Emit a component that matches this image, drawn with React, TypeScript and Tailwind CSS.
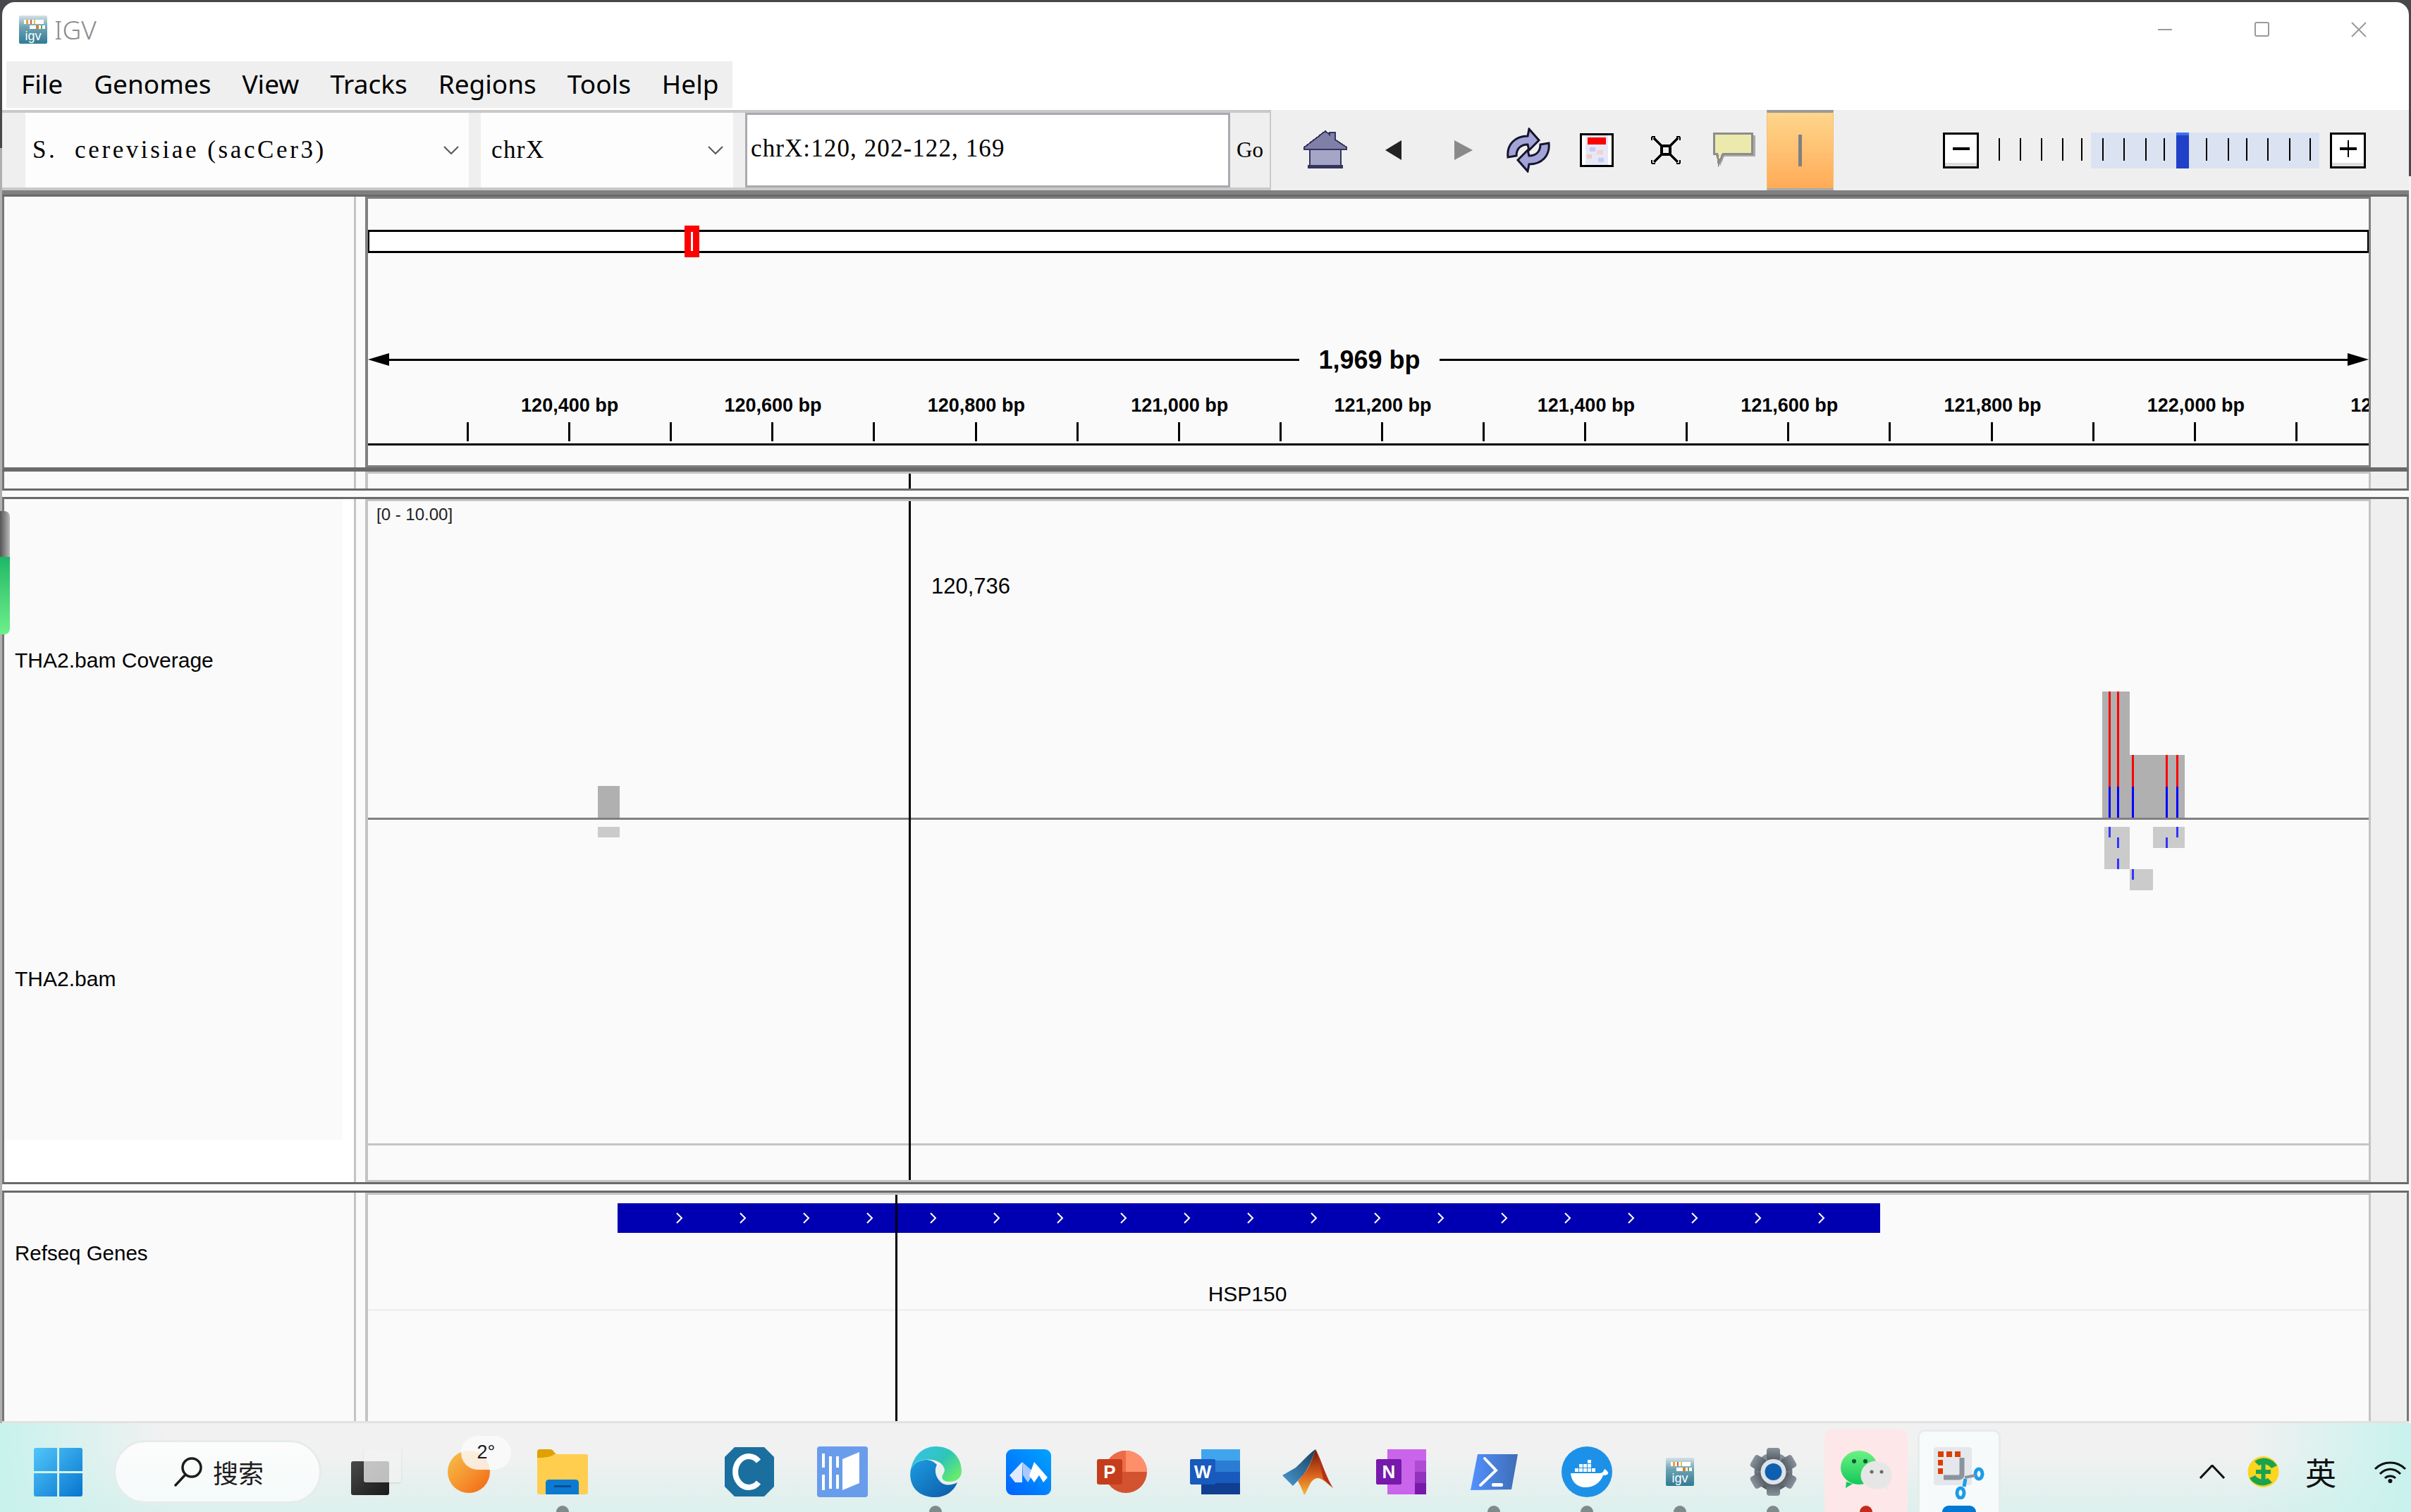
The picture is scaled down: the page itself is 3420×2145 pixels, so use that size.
import type { ReactNode } from 'react';

const TICK_START = 142; // first tick, relative to the data pane
const TICK_STEP = 144.1;
const LABEL_STEP = 144.17;
const TICKS = Array.from({ length: 19 }, (_, i) => TICK_START + i * TICK_STEP);
const LABELS = [
  '120,400', '120,600', '120,800', '121,000', '121,200', '121,400', '121,600', '121,800', '122,000', '122,200',
];
const CHEVRONS = Array.from({ length: 19 }, (_, i) => 88 + i * 90);
const ZOOM_TICKS = [28, 58, 88, 118, 145, 175, 205, 236, 262, 322, 353, 379, 409, 440, 469];

function IgvLogo({ size }: { size: number }) {
  return (
    <svg width={size} height={size} viewBox="0 0 40 40">
      <defs>
        <linearGradient id={`igv${size}`} x1="0" y1="0" x2="0" y2="1">
          <stop offset="0" stopColor="#d5e2e6" />
          <stop offset="0.4" stopColor="#6fa3b4" />
          <stop offset="1" stopColor="#2f7b95" />
        </linearGradient>
      </defs>
      <rect x="0" y="0" width="40" height="40" rx="2" fill={`url(#igv${size})`} />
      <rect x="7" y="6" width="28" height="6" fill="#fff" />
      <rect x="10" y="6" width="3" height="6" fill="#e8a33a" />
      <rect x="16" y="6" width="2" height="6" fill="#d9534f" />
      <rect x="21" y="6" width="2" height="6" fill="#e8c33a" />
      <rect x="15" y="14" width="22" height="5" fill="#fff" />
      <rect x="24" y="14" width="4" height="5" fill="#e07b2a" />
      <rect x="31" y="14" width="2" height="5" fill="#6aa84f" />
      <text x="20" y="35" textAnchor="middle" fontFamily="Liberation Sans" fontSize="18" fill="#fff">igv</text>
    </svg>
  );
}

function WindowControls() {
  return (
    <svg width="296" height="24" viewBox="0 0 296 24" fill="none" stroke="#9a9a9a" strokeWidth="2">
      <path d="M0 12H20" />
      <rect x="138" y="2" width="19" height="19" rx="2" />
      <path d="M275 2L295 22M295 2L275 22" />
    </svg>
  );
}

function ComboBox({ text, width, tracking }: { text: string; width: string; tracking: string }) {
  return (
    <div className={`flex h-full items-center justify-between bg-[#fdfdfd] ${width}`}>
      <span className={`pl-[10px] font-['Liberation_Serif',serif] text-[35px] whitespace-pre text-black ${tracking}`}>{text}</span>
      <svg className="mr-[14px]" width="22" height="12" viewBox="0 0 22 12" fill="none" stroke="#555" strokeWidth="2">
        <path d="M1 1L11 11L21 1" />
      </svg>
    </div>
  );
}

function HomeIcon() {
  return (
    <svg width="64" height="56" viewBox="0 0 64 56" shapeRendering="crispEdges">
      <path d="M32 1L38 6V3H46V13L62 24V27H2V24Z" fill="#7f7fa8" stroke="#35355f" strokeWidth="2" />
      <rect x="10" y="27" width="44" height="23" fill="#a5a5c8" stroke="#35355f" strokeWidth="2" />
      <rect x="7" y="49" width="50" height="5" fill="#35355f" />
    </svg>
  );
}

function RefreshIcon() {
  return (
    <svg width="66" height="64" viewBox="0 0 66 64">
      <path d="M4 42C2 24 14 12 32 12L34 2L48 18L34 32L32 24C22 24 16 30 16 40Z" fill="#a3a3d8" stroke="#15152f" strokeWidth="3" />
      <path d="M62 22C64 40 52 52 34 52L32 62L18 46L32 32L34 40C44 40 50 34 50 24Z" fill="#a3a3d8" stroke="#15152f" strokeWidth="3" />
    </svg>
  );
}

function RegionIcon() {
  return (
    <svg width="48" height="48" viewBox="0 0 48 48" shapeRendering="crispEdges">
      <rect x="0" y="0" width="48" height="48" fill="#000" />
      <rect x="3" y="3" width="42" height="42" fill="#fff" />
      <rect x="8" y="3" width="32" height="42" fill="#e6e8f8" />
      <rect x="11" y="6" width="26" height="10" fill="#ff0000" />
      <rect x="14" y="20" width="8" height="6" fill="#c3cdf2" />
      <rect x="24" y="24" width="9" height="6" fill="#f5d2ca" />
      <rect x="10" y="30" width="7" height="6" fill="#f5c9c0" />
      <rect x="26" y="35" width="8" height="6" fill="#c3cdf2" />
    </svg>
  );
}

function FitIcon() {
  return (
    <svg width="42" height="40" viewBox="0 0 42 40" fill="none" stroke="#000" strokeWidth="3" shapeRendering="crispEdges">
      <rect x="15" y="14" width="12" height="12" strokeWidth="4" />
      <path d="M4 3L15 14M38 3L27 14M4 37L15 26M38 37L27 26" strokeWidth="4" />
      <path d="M1 1H6M1 1V6M41 1H36M41 1V6M1 39H6M1 39V34M41 39H36M41 39V34" strokeWidth="2" />
    </svg>
  );
}

function CommentIcon() {
  return (
    <svg width="60" height="50" viewBox="0 0 60 50" shapeRendering="crispEdges">
      <path d="M4 4H60V34H16L10 48L8 34H4Z" fill="#aaa" />
      <path d="M1.5 1.5H55.5V30.5H14L8 44L6 30.5H1.5Z" fill="#ece9ac" stroke="#8c8c8c" strokeWidth="3" />
    </svg>
  );
}

function ZoomButton({ plus }: { plus?: boolean }) {
  return (
    <div className="flex h-[51px] w-[51px] flex-col border-[3px] border-black bg-white">
      <div className="flex flex-1 items-center justify-center">
        <svg width="30" height="30" viewBox="0 0 30 30" stroke="#000" fill="none">
          <path d="M3 15H27" strokeWidth="4" />
          {plus && <path d="M15 3V27" strokeWidth="2" />}
        </svg>
      </div>
      <div className="h-[5px] bg-[#dddddd]" />
    </div>
  );
}

function ZoomSlider() {
  return (
    <svg width="498" height="51" viewBox="0 0 498 51" shapeRendering="crispEdges">
      <rect x="159" y="0" width="324" height="51" fill="#dbe2f1" />
      {ZOOM_TICKS.map((x) => (
        <rect key={x} x={x} y="8" width="2" height="32" fill="#000" />
      ))}
      <rect x="280" y="0" width="18" height="51" fill="#2040c8" />
      <rect x="280" y="0" width="18" height="4" fill="#3f6fe8" />
    </svg>
  );
}

function Toolbar() {
  return (
    <div className="flex h-[114px] bg-[#efefef]">
      <div className="flex h-full w-[1800px] items-stretch border-y-[4px] border-r-[2px] border-[#c9c9c9] pl-[33px]">
        <ComboBox text="S.  cerevisiae (sacCer3)" width="w-[629px]" tracking="tracking-[3.6px]" />
        <div className="w-[17px]" />
        <ComboBox text="chrX" width="w-[358px]" tracking="tracking-[1.4px] ml-[5px]" />
        <div className="w-[17px]" />
        <div className="flex w-[688px] items-center border-[3px] border-[#a9a9b0] bg-white pb-[3px] pl-[5px] font-['Liberation_Serif',serif] text-[35px] tracking-[1.1px] whitespace-pre text-black">
          chrX:120, 202-122, 169
        </div>
        <div className="flex flex-1 items-center pl-[9px] font-['Liberation_Serif',serif] text-[31px] text-black">Go</div>
      </div>
      <div className="flex flex-1 items-center">
        <div className="ml-[45px]"><HomeIcon /></div>
        <svg className="ml-[53px]" width="24" height="28" viewBox="0 0 24 28"><path d="M0 14L23 0V28Z" fill="#222" /></svg>
        <svg className="ml-[74px]" width="26" height="28" viewBox="0 0 26 28"><path d="M26 14L0 0V28Z" fill="#8a8a8a" /></svg>
        <div className="ml-[46px]"><RefreshIcon /></div>
        <div className="ml-[40px]"><RegionIcon /></div>
        <div className="ml-[53px]"><FitIcon /></div>
        <div className="ml-[46px]"><CommentIcon /></div>
        <div className="ml-[16px] flex h-full w-[95px] flex-col items-center justify-center border-x border-t-[4px] border-b-[3px] border-x-[#f0c070] border-t-[#999] border-b-[#aaa] bg-gradient-to-b from-[#fed68b] to-[#ffab57]">
          <div className="h-[45px] w-[5px] bg-[#808080]" />
        </div>
        <div className="ml-[155px] flex items-center">
          <ZoomButton />
          <ZoomSlider />
          <ZoomButton plus />
        </div>
      </div>
    </div>
  );
}

type PanelProps = {
  outer: string;
  data: string;
  left: ReactNode;
  leftClass?: string;
  children?: ReactNode;
};

function Panel({ outer, data, left, leftClass = 'bg-[#fafafa]', children }: PanelProps) {
  return (
    <div className={`flex border-x-[3px] border-x-[#777777] border-y-[#6a6a6a] bg-[#fafafa] ${outer}`}>
      <div className={`relative w-[496px] text-black ${leftClass}`}>{left}</div>
      <div className="w-[3px] bg-[#c4c4c4]" />
      <div className="w-[13px]" />
      <div className={`relative w-[2845px] overflow-hidden border-x-[4px] border-r-[3px] bg-[#fafafa] ${data}`}>{children}</div>
      <div className="flex-1 bg-[#efefef]" />
    </div>
  );
}

function Ruler() {
  return (
    <div>
      <div className="mt-[44px] h-[33px] border-x-[2px] border-y-[3px] border-black bg-white" />
      {/* chromosome position marker */}
      <div className="absolute top-[38px] left-[449px] flex h-[45px] w-[21px] items-center justify-center bg-[#ff0000]">
        <div className="h-[27px] w-[3px] bg-white" />
      </div>
      <div className="mt-[133px] flex h-[36px] items-center">
        <svg width="30" height="18" viewBox="0 0 30 18"><path d="M0 9L30 0V18Z" fill="#000" /></svg>
        <div className="h-[3px] w-[1291px] bg-black" />
        <div className="w-[199px] pt-[2px] text-center text-[36px] font-bold text-black">1,969 bp</div>
        <div className="h-[3px] flex-1 bg-black" />
        <svg width="30" height="18" viewBox="0 0 30 18"><path d="M30 9L0 0V18Z" fill="#000" /></svg>
      </div>
      <div className="relative mt-[29px] h-[36px]">
        {LABELS.map((label, i) => (
          <span
            key={label}
            className="absolute top-0 -translate-x-1/2 text-[27px] leading-[36px] font-bold whitespace-pre text-black"
            style={{ left: TICK_START + LABEL_STEP * (2 * i + 1) }}
          >
            {label} bp
          </span>
        ))}
      </div>
      <svg className="mt-[6px] block" width="2838" height="27" viewBox="0 0 2838 27" shapeRendering="crispEdges">
        {TICKS.map((x) => (
          <rect key={x} x={x - 2} y="0" width="3" height="27" fill="#000" />
        ))}
      </svg>
      <div className="mt-[3px] h-[3px] bg-black" />
    </div>
  );
}

// same screen coordinates as the reference through the viewBox
function CoverageTrack() {
  const cov = '#b0b0b0';
  const read = '#cbcbcb';
  const mis = '#3333ff';
  return (
    <svg className="absolute top-0 left-0 block" width="2838" height="966" viewBox="522 711 2838 966" shapeRendering="crispEdges">
      <rect x="522" y="1622" width="2838" height="3" fill="#c4c4c4" />
      <rect x="848" y="1115" width="31" height="45" fill={cov} />
      <rect x="848" y="1173" width="31" height="15" fill={read} />
      <rect x="2982" y="981" width="39" height="179" fill={cov} />
      <rect x="3021" y="1071" width="78" height="89" fill={cov} />
      {[[2991, 981], [3003, 981], [3024, 1071], [3072, 1071], [3087, 1071]].map(([x, y]) => (
        <g key={x}>
          <rect x={x} y={y} width="3" height={1116 - y} fill="#ff0000" />
          <rect x={x} y="1116" width="3" height="44" fill="#0000ff" />
        </g>
      ))}
      <rect x="522" y="1160" width="2838" height="3" fill="#808080" />
      <rect x="2985" y="1173" width="36" height="60" fill={read} />
      <rect x="3054" y="1173" width="45" height="30" fill={read} />
      <rect x="3021" y="1233" width="33" height="30" fill={read} />
      <rect x="2991" y="1173" width="3" height="15" fill={mis} />
      <rect x="3003" y="1188" width="3" height="15" fill={mis} />
      <rect x="3003" y="1218" width="3" height="15" fill={mis} />
      <rect x="3024" y="1233" width="3" height="15" fill={mis} />
      <rect x="3087" y="1173" width="3" height="15" fill={mis} />
      <rect x="3072" y="1188" width="3" height="15" fill={mis} />
    </svg>
  );
}

function GeneTrack() {
  return (
    <div>
      <svg className="mt-[12px] ml-[354px] block" width="1791" height="42" viewBox="0 0 1791 42">
        <rect width="1791" height="42" fill="#0000b2" />
        {CHEVRONS.map((x) => (
          <path key={x} d={`M${x - 4} 14L${x + 3} 21L${x - 4} 28`} fill="none" stroke="#fff" strokeWidth="2" />
        ))}
      </svg>
      <div className="mt-[69px] ml-[352px] h-[36px] w-[1791px] text-center text-[30px] leading-[36px] text-black">HSP150</div>
      <div className="mt-[3px] h-[3px] bg-[#f0f0f0]" />
    </div>
  );
}

function Tracks() {
  return (
    <div className="flex flex-1 flex-col">
      <Panel outer="h-[390px] border-b-[6px]" data="border-x-[#808080] border-y-[3px] border-y-[#808080]" left={null}>
        <Ruler />
      </Panel>
      <Panel outer="h-[27px] border-b-[3px]" data="border-x-[#c4c4c4] border-t-[3px] border-t-[#c4c4c4]" left={null}>
        <div className="absolute top-0 left-[767px] h-full w-[3px] bg-black" />
      </Panel>
      <div className="h-[9px] bg-[#fafafa]" />
      <Panel
        outer="h-[975px] border-y-[3px]"
        data="border-x-[#c4c4c4] border-y-[3px] border-y-[#c4c4c4]"
        leftClass="bg-white"
        left={
          <div className="h-[909px] w-[480px] bg-[#fafafa] pt-[211px] pl-[15px] text-[30px] leading-[36px]">
            <div>THA2.bam Coverage</div>
            <div className="mt-[416px]">THA2.bam</div>
          </div>
        }
      >
        <CoverageTrack />
        <div className="absolute top-[5px] left-[12px] text-[24px] leading-[28px] whitespace-pre text-[#222]">[0 - 10.00]</div>
        <div className="absolute top-[103px] left-[799px] text-[31px] leading-[36px] text-black">120,736</div>
        <div className="absolute top-0 left-[767px] h-full w-[3px] bg-black" />
      </Panel>
      <div className="h-[9px] bg-[#fafafa]" />
      <Panel
        outer="flex-1 border-t-[3px]"
        data="border-x-[#c4c4c4] border-t-[3px] border-t-[#c4c4c4]"
        left={<div className="pt-[68px] pl-[15px] text-[29.5px] leading-[36px]">Refseq Genes</div>}
      >
        <GeneTrack />
        <div className="absolute top-0 left-[748px] h-full w-[3px] bg-black" />
      </Panel>
      <div className="h-[3px] bg-[#e2e2e2]" />
    </div>
  );
}

function StartIcon() {
  return (
    <svg width="69" height="69" viewBox="0 0 69 69">
      <defs>
        <linearGradient id="win" x1="0" y1="0" x2="1" y2="1">
          <stop offset="0" stopColor="#52c6fa" />
          <stop offset="1" stopColor="#0675cf" />
        </linearGradient>
      </defs>
      <path d="M3 0H33V33H0V3Q0 0 3 0ZM36 0H66Q69 0 69 3V33H36ZM0 36H33V69H3Q0 69 0 66ZM36 36H69V66Q69 69 66 69H36Z" fill="url(#win)" />
    </svg>
  );
}

function SearchBox() {
  return (
    <div className="flex h-[90px] w-[295px] items-center justify-center gap-[15px] rounded-full border-[3px] border-[#e6eceb] bg-gradient-to-b from-[#fcfcfc] to-[#f6fafa] pl-[4px]">
      <svg width="40" height="42" viewBox="0 0 40 42" fill="none" stroke="#1c1c1c" strokeWidth="3.5">
        <circle cx="25" cy="15" r="13" />
        <path d="M16 25L2 40" strokeLinecap="round" />
      </svg>
      <span className="font-['Noto_Sans_CJK_SC',sans-serif] text-[36px] leading-none text-[#1c1c1c]">搜索</span>
    </div>
  );
}

function TaskViewIcon() {
  return (
    <div className="relative h-[66px] w-[71px]">
      <div className="absolute top-[18px] left-0 h-[48px] w-[54px] rounded-[3px] bg-gradient-to-br from-[#4a4a4a] to-[#1a1a1a]" />
      <div className="absolute top-0 left-[18px] h-[48px] w-[53px] rounded-[3px] bg-[#f2f2f2]/75 shadow-sm" />
    </div>
  );
}

function WeatherIcon() {
  return (
    <div className="relative -mt-[22px] h-[81px] w-[90px]">
      <div className="absolute bottom-0 left-0 h-[60px] w-[60px] rounded-full bg-gradient-to-br from-[#f3c34a] to-[#f2620e]" />
      <div className="absolute top-0 left-[19px] flex h-[48px] w-[71px] items-center justify-center rounded-full bg-[#fafafa]/85 text-[27px] text-[#1c1c1c]">2°</div>
    </div>
  );
}

function FolderIcon() {
  return (
    <svg width="72" height="64" viewBox="0 0 72 64">
      <path d="M0 4Q0 0 4 0H18Q22 0 24 4L28 8V14H0Z" fill="#e0a100" />
      <path d="M0 12Q20 12 24 7H70Q72 7 72 10V61Q72 64 69 64H3Q0 64 0 61Z" fill="#ffce4f" />
      <path d="M12 64V48Q12 43 17 43H54Q59 43 59 48V64Z" fill="#0c7ad0" />
      <rect x="24" y="51" width="24" height="3" fill="#0a4f90" />
    </svg>
  );
}

function CIcon() {
  return (
    <svg width="70" height="70" viewBox="0 0 70 70">
      <path d="M14 0H56L70 14V56L56 70H14L0 56V14Z" fill="#1a6f9f" />
      <path d="M48 20A19 22 0 1 0 48 50" fill="none" stroke="#ffffff" strokeWidth="8" />
    </svg>
  );
}

function BookIcon() {
  return (
    <svg width="72" height="72" viewBox="0 0 72 72">
      <rect width="72" height="72" rx="4" fill="#6a9cec" />
      <path d="M36 18L60 8V52L36 62Z" fill="#ffffff" />
      <path d="M9 10V30M9 40V62M19 14V60M29 14V30M29 40V60" stroke="#fff" strokeWidth="4" fill="none" />
    </svg>
  );
}

function EdgeIcon() {
  return (
    <svg width="73" height="72" viewBox="0 0 73 72">
      <defs>
        <linearGradient id="edgeTop" x1="0" y1="0" x2="1" y2="0.7">
          <stop offset="0" stopColor="#35c1f1" />
          <stop offset="0.6" stopColor="#2fc6b5" />
          <stop offset="1" stopColor="#66eb6e" />
        </linearGradient>
        <linearGradient id="edgeLow" x1="0" y1="0" x2="1" y2="1">
          <stop offset="0" stopColor="#1b9de2" />
          <stop offset="1" stopColor="#0c59a4" />
        </linearGradient>
      </defs>
      <path d="M1 32C-3 52 8 72 36 72C50 72 62 64 67 51C60 55 48 57 42 49C36 43 34 33 38 26C28 14 8 18 1 32Z" fill="url(#edgeLow)" />
      <path d="M1 32C6 10 20 0 37 0C58 0 73 15 73 35C73 46 64 50 55 50C48 50 44 46 46 41C48 37 50 35 48 30C44 20 30 17 18 19C10 21 4 26 1 32Z" fill="url(#edgeTop)" />
    </svg>
  );
}

function FeishuIcon() {
  return (
    <svg width="64" height="65" viewBox="0 0 64 65">
      <defs>
        <linearGradient id="fs" x1="0" y1="1" x2="1" y2="0">
          <stop offset="0" stopColor="#0062ff" />
          <stop offset="1" stopColor="#00a4ff" />
        </linearGradient>
      </defs>
      <rect width="64" height="65" rx="9" fill="url(#fs)" />
      <path d="M5 37L23 18V47L13 47Z" fill="#dfeaff" />
      <path d="M23 18L24 37L31 47L40 33Z" fill="#a9c8ff" />
      <path d="M40 18L59 40L53 47L47 37L40 47L33 37Z" fill="#ffffff" />
    </svg>
  );
}

function OfficeTile({ letter, bg }: { letter: string; bg: string }) {
  return (
    <g>
      <rect x="0" y="14" width="36" height="36" rx="3" fill={bg} />
      <text x="18" y="41" textAnchor="middle" fontFamily="Liberation Sans" fontWeight="bold" fontSize="26" fill="#fff">{letter}</text>
    </g>
  );
}

function PowerPointIcon() {
  return (
    <svg width="71" height="64" viewBox="0 0 71 64">
      <circle cx="41" cy="32" r="30" fill="#d35230" />
      <path d="M41 2A30 30 0 0 1 71 32H41Z" fill="#ff8f6b" />
      <path d="M41 2A30 30 0 0 0 11 32H41Z" fill="#ed6c47" />
      <OfficeTile letter="P" bg="#c43e1c" />
    </svg>
  );
}

function WordIcon() {
  return (
    <svg width="71" height="64" viewBox="0 0 71 64" shapeRendering="crispEdges">
      <rect x="16" y="0" width="55" height="16" fill="#41a5ee" />
      <rect x="16" y="16" width="55" height="16" fill="#2b7cd3" />
      <rect x="16" y="32" width="55" height="16" fill="#185abd" />
      <rect x="16" y="48" width="55" height="16" fill="#103f91" />
      <OfficeTile letter="W" bg="#185abd" />
    </svg>
  );
}

function MatlabIcon() {
  return (
    <svg width="72" height="65" viewBox="0 0 72 65">
      <defs>
        <linearGradient id="mat" x1="0" y1="0" x2="0" y2="1">
          <stop offset="0" stopColor="#6a1608" />
          <stop offset="0.55" stopColor="#d9601a" />
          <stop offset="1" stopColor="#f4b93a" />
        </linearGradient>
        <linearGradient id="matBlue" x1="0" y1="1" x2="1" y2="0">
          <stop offset="0" stopColor="#4a9bd4" />
          <stop offset="1" stopColor="#16405f" />
        </linearGradient>
      </defs>
      <path d="M0 37L19 26C28 18 38 6 47 0C42 16 36 28 30 36L15 52Z" fill="url(#matBlue)" />
      <path d="M47 0C42 16 36 30 28 38L22 45C26 52 29 60 31 65C36 60 38 46 46 42C54 38 60 46 72 55C62 40 54 12 47 0Z" fill="url(#mat)" />
      <path d="M47 0C54 12 62 40 72 55C66 50 62 46 58 42C54 24 50 10 47 0Z" fill="#b5301a" />
    </svg>
  );
}

function OneNoteIcon() {
  return (
    <svg width="71" height="64" viewBox="0 0 71 64" shapeRendering="crispEdges">
      <rect x="16" y="0" width="55" height="64" fill="#ca64ea" />
      <rect x="55" y="16" width="16" height="16" fill="#ae4bd5" />
      <rect x="55" y="32" width="16" height="16" fill="#9332bf" />
      <rect x="55" y="48" width="16" height="16" fill="#7719aa" />
      <OfficeTile letter="N" bg="#7719aa" />
    </svg>
  );
}

function PowerShellIcon() {
  return (
    <svg width="67" height="51" viewBox="0 0 67 51">
      <defs>
        <linearGradient id="ps" x1="0" y1="0" x2="1" y2="0">
          <stop offset="0" stopColor="#5391fe" />
          <stop offset="1" stopColor="#3e6db5" />
        </linearGradient>
      </defs>
      <path d="M10 0H67L58 50L0 51Z" fill="url(#ps)" />
      <path d="M20 6L36 23L14 44" fill="none" stroke="#fff" strokeWidth="4" strokeLinecap="round" />
      <rect x="30" y="41" width="16" height="5" rx="2" fill="#fff" />
    </svg>
  );
}

function DockerIcon() {
  return (
    <svg width="72" height="72" viewBox="0 0 72 72">
      <circle cx="36" cy="36" r="36" fill="#1d91e8" />
      <path d="M13 38H54C58 38 60 35 61 32C64 34 67 36 66 39C63 41 61 41 59 41C55 52 45 58 34 58C22 58 14 50 13 38Z" fill="#fff" />
      <g fill="#fff">
        <rect x="19" y="31" width="5" height="5" />
        <rect x="25" y="31" width="5" height="5" />
        <rect x="31" y="31" width="5" height="5" />
        <rect x="37" y="31" width="5" height="5" />
        <rect x="43" y="31" width="5" height="5" />
        <rect x="25" y="25" width="5" height="5" />
        <rect x="31" y="25" width="5" height="5" />
        <rect x="37" y="25" width="5" height="5" />
        <rect x="37" y="19" width="5" height="5" />
      </g>
    </svg>
  );
}

function GearIcon() {
  return (
    <svg width="73" height="68" viewBox="0 0 73 68">
      <defs>
        <linearGradient id="gear" x1="0" y1="0" x2="0" y2="1">
          <stop offset="0" stopColor="#8a939c" />
          <stop offset="1" stopColor="#535b64" />
        </linearGradient>
      </defs>
      <g fill="url(#gear)">
        <circle cx="36.5" cy="34" r="27" />
        {[0, 60, 120, 180, 240, 300].map((a) => (
          <rect key={a} x="27" y="0" width="19" height="18" rx="4" transform={`rotate(${a} 36.5 34)`} />
        ))}
      </g>
      <circle cx="36.5" cy="34" r="18" fill="#dde3e8" />
      <circle cx="36.5" cy="34" r="12" fill="#0f5fb0" />
    </svg>
  );
}

function WeChatIcon() {
  return (
    <svg width="73" height="60" viewBox="0 0 73 60">
      <defs>
        <linearGradient id="wx" x1="0" y1="0" x2="0" y2="1">
          <stop offset="0" stopColor="#6df283" />
          <stop offset="1" stopColor="#12c95a" />
        </linearGradient>
      </defs>
      <path d="M8 44L7 53L17 47Z" fill="#12c95a" />
      <ellipse cx="26" cy="24" rx="26" ry="24" fill="url(#wx)" />
      <ellipse cx="19" cy="15" rx="3" ry="3" fill="#0b5a30" />
      <ellipse cx="35" cy="15" rx="3" ry="3" fill="#0b5a30" />
      <path d="M60 48L66 56L64 44Z" fill="#e2e2e2" />
      <ellipse cx="51" cy="35" rx="22" ry="20" fill="#e6e6e6" stroke="#fde7e9" strokeWidth="1" />
      <ellipse cx="44" cy="30" rx="2.5" ry="2.5" fill="#6a6a6a" />
      <ellipse cx="58" cy="30" rx="2.5" ry="2.5" fill="#6a6a6a" />
    </svg>
  );
}

function SnipIcon() {
  return (
    <svg width="72" height="74" viewBox="0 0 72 74">
      <rect x="0" y="0" width="54" height="54" rx="4" fill="#e4e8ec" />
      <g fill="#dc3e00">
        <rect x="6" y="6" width="8" height="8" />
        <rect x="18" y="6" width="8" height="8" />
        <rect x="30" y="6" width="8" height="8" />
        <rect x="6" y="18" width="7" height="8" />
        <rect x="6" y="30" width="7" height="8" />
      </g>
      <path d="M40 15V38Q40 43 35 43H14" fill="none" stroke="#8b949c" strokeWidth="7" />
      <ellipse cx="64" cy="38" rx="5" ry="7" fill="none" stroke="#1c9ce8" strokeWidth="5" />
      <ellipse cx="38" cy="65" rx="5" ry="7" fill="none" stroke="#1c9ce8" strokeWidth="5" />
      <path d="M43 56L45 45" stroke="#1c9ce8" strokeWidth="5" />
      <path d="M44 43L59 40" stroke="#8b949c" strokeWidth="4" />
    </svg>
  );
}

function SafeIcon() {
  return (
    <svg width="45" height="46" viewBox="0 0 45 46">
      <circle cx="22.5" cy="23" r="22" fill="#fbd51e" />
      <path d="M10 8A22 22 0 0 1 42 14L34 18A14 14 0 0 0 16 14Z" fill="#1aa34f" />
      <path d="M35 38A22 22 0 0 1 3 32L11 28A14 14 0 0 0 29 32Z" fill="#1aa34f" />
      <path d="M22.5 12V34M12 23H33" stroke="#1aa34f" strokeWidth="6" />
    </svg>
  );
}

function WifiIcon() {
  return (
    <svg width="47" height="34" viewBox="0 0 47 34" fill="none" stroke="#111" strokeWidth="3">
      <path d="M2 13C14 1 33 1 45 13" />
      <path d="M9 20C18 11 29 11 38 20" />
      <path d="M16 26C20 22 27 22 31 26" />
      <circle cx="23.5" cy="30" r="3" fill="#111" stroke="none" />
    </svg>
  );
}

type SlotProps = {
  children: ReactNode;
  width?: string;
  dot?: string;
  box?: string;
};

function Slot({ children, width = 'w-[132px]', dot, box = '' }: SlotProps) {
  return (
    <div className={`flex h-full items-end justify-center ${width}`}>
      <div className={`relative flex h-[117px] w-[118px] items-center justify-center rounded-t-[10px] pt-[3px] ${box}`}>
        {children}
        {dot && <div className={`absolute bottom-0 left-1/2 h-[9px] -translate-x-1/2 rounded-t-full ${dot}`} />}
      </div>
    </div>
  );
}

function Taskbar() {
  const gray = 'w-[18px] bg-[#7f8a8a]';
  return (
    <div className="flex h-[126px] items-center bg-[linear-gradient(to_right,#c8f2ed,transparent_7%,transparent_93%,#c8f2ed),linear-gradient(to_bottom,#f1f1f1_35%,#dcf0ed)]">
      <div className="ml-[16px] flex h-full w-[132px] items-center justify-center pt-[12px]"><StartIcon /></div>
      <div className="ml-[13px] flex h-full items-center pt-[12px]"><SearchBox /></div>
      <div className="ml-[11px]" />
      <Slot><TaskViewIcon /></Slot>
      <div className="ml-[22px]" />
      <Slot width="w-[118px]"><WeatherIcon /></Slot>
      <Slot width="w-[118px]" dot={gray}><FolderIcon /></Slot>
      <div className="ml-[140px]" />
      <Slot><CIcon /></Slot>
      <Slot><BookIcon /></Slot>
      <Slot dot={gray}><EdgeIcon /></Slot>
      <Slot><FeishuIcon /></Slot>
      <Slot><PowerPointIcon /></Slot>
      <Slot><WordIcon /></Slot>
      <Slot><MatlabIcon /></Slot>
      <Slot><OneNoteIcon /></Slot>
      <Slot dot={gray}><PowerShellIcon /></Slot>
      <Slot dot={gray}><DockerIcon /></Slot>
      <Slot dot={gray}><IgvLogo size={40} /></Slot>
      <Slot dot={gray}><GearIcon /></Slot>
      <Slot dot="w-[18px] bg-[#c42b1c]" box="bg-[#fde7e9]"><WeChatIcon /></Slot>
      <Slot dot="w-[48px] bg-[#0078d4]" box="bg-[#f6fafa] border-[3px] border-b-0 border-[#e6ecec]"><SnipIcon /></Slot>
      <div className="flex h-full items-center pt-[12px]">
        <svg className="ml-[275px]" width="36" height="20" viewBox="0 0 36 20" fill="none" stroke="#111" strokeWidth="3">
          <path d="M1 19L18 1L35 19" />
        </svg>
        <div className="ml-[32px]"><SafeIcon /></div>
        <div className="ml-[37px] font-['Noto_Sans_CJK_SC',sans-serif] text-[44px] leading-none text-[#111]">英</div>
        <div className="ml-[53px]"><WifiIcon /></div>
      </div>
    </div>
  );
}

export default function App() {
  return (
    <div className="flex h-[2145px] w-[3420px] flex-col overflow-hidden bg-[#48484c] font-['Liberation_Sans',sans-serif]">
      <div className="flex h-[2019px]">
        <div className="w-[3px] bg-[linear-gradient(to_bottom,#48484c_210px,#b0b0b0_210px)]" />
        <div className="mt-[3px] flex w-[3414px] flex-col rounded-t-[18px] bg-white">
          <div className="flex h-[84px] items-center pb-[6px]">
            <div className="ml-[24px]"><IgvLogo size={40} /></div>
            <span className="ml-[10px] font-['Noto_Sans',sans-serif] text-[37px] font-light text-[#8c8c8c]">IGV</span>
            <div className="mr-[60px] ml-auto"><WindowControls /></div>
          </div>
          <div className="ml-[6px] flex h-[66px] w-[1030px] items-center gap-[44px] bg-[#efefef] pb-[3px] pl-[21px] font-['Noto_Sans',sans-serif] text-[37px] text-black">
            <span>File</span>
            <span>Genomes</span>
            <span>View</span>
            <span>Tracks</span>
            <span>Regions</span>
            <span>Tools</span>
            <span>Help</span>
          </div>
          <div className="h-[3px]" />
          <Toolbar />
          <div className="h-[9px] bg-[linear-gradient(to_bottom,#808080_66%,#6a6a6a_66%)]" />
          <Tracks />
        </div>
        <div className="w-[3px] bg-[linear-gradient(to_bottom,#48484c_250px,#f5f5f5_250px)]" />
      </div>
      <Taskbar />
      {/* desktop widget peeking out behind the window's left edge */}
      <div className="absolute top-[725px] left-0 flex h-[175px] w-[14px] flex-col overflow-hidden rounded-r-[8px]">
        <div className="h-[65px] bg-gradient-to-r from-[#555555] to-[#bbbbbb]" />
        <div className="flex-1 bg-gradient-to-b from-[#18b868] to-[#6cf08a]" />
      </div>
    </div>
  );
}
